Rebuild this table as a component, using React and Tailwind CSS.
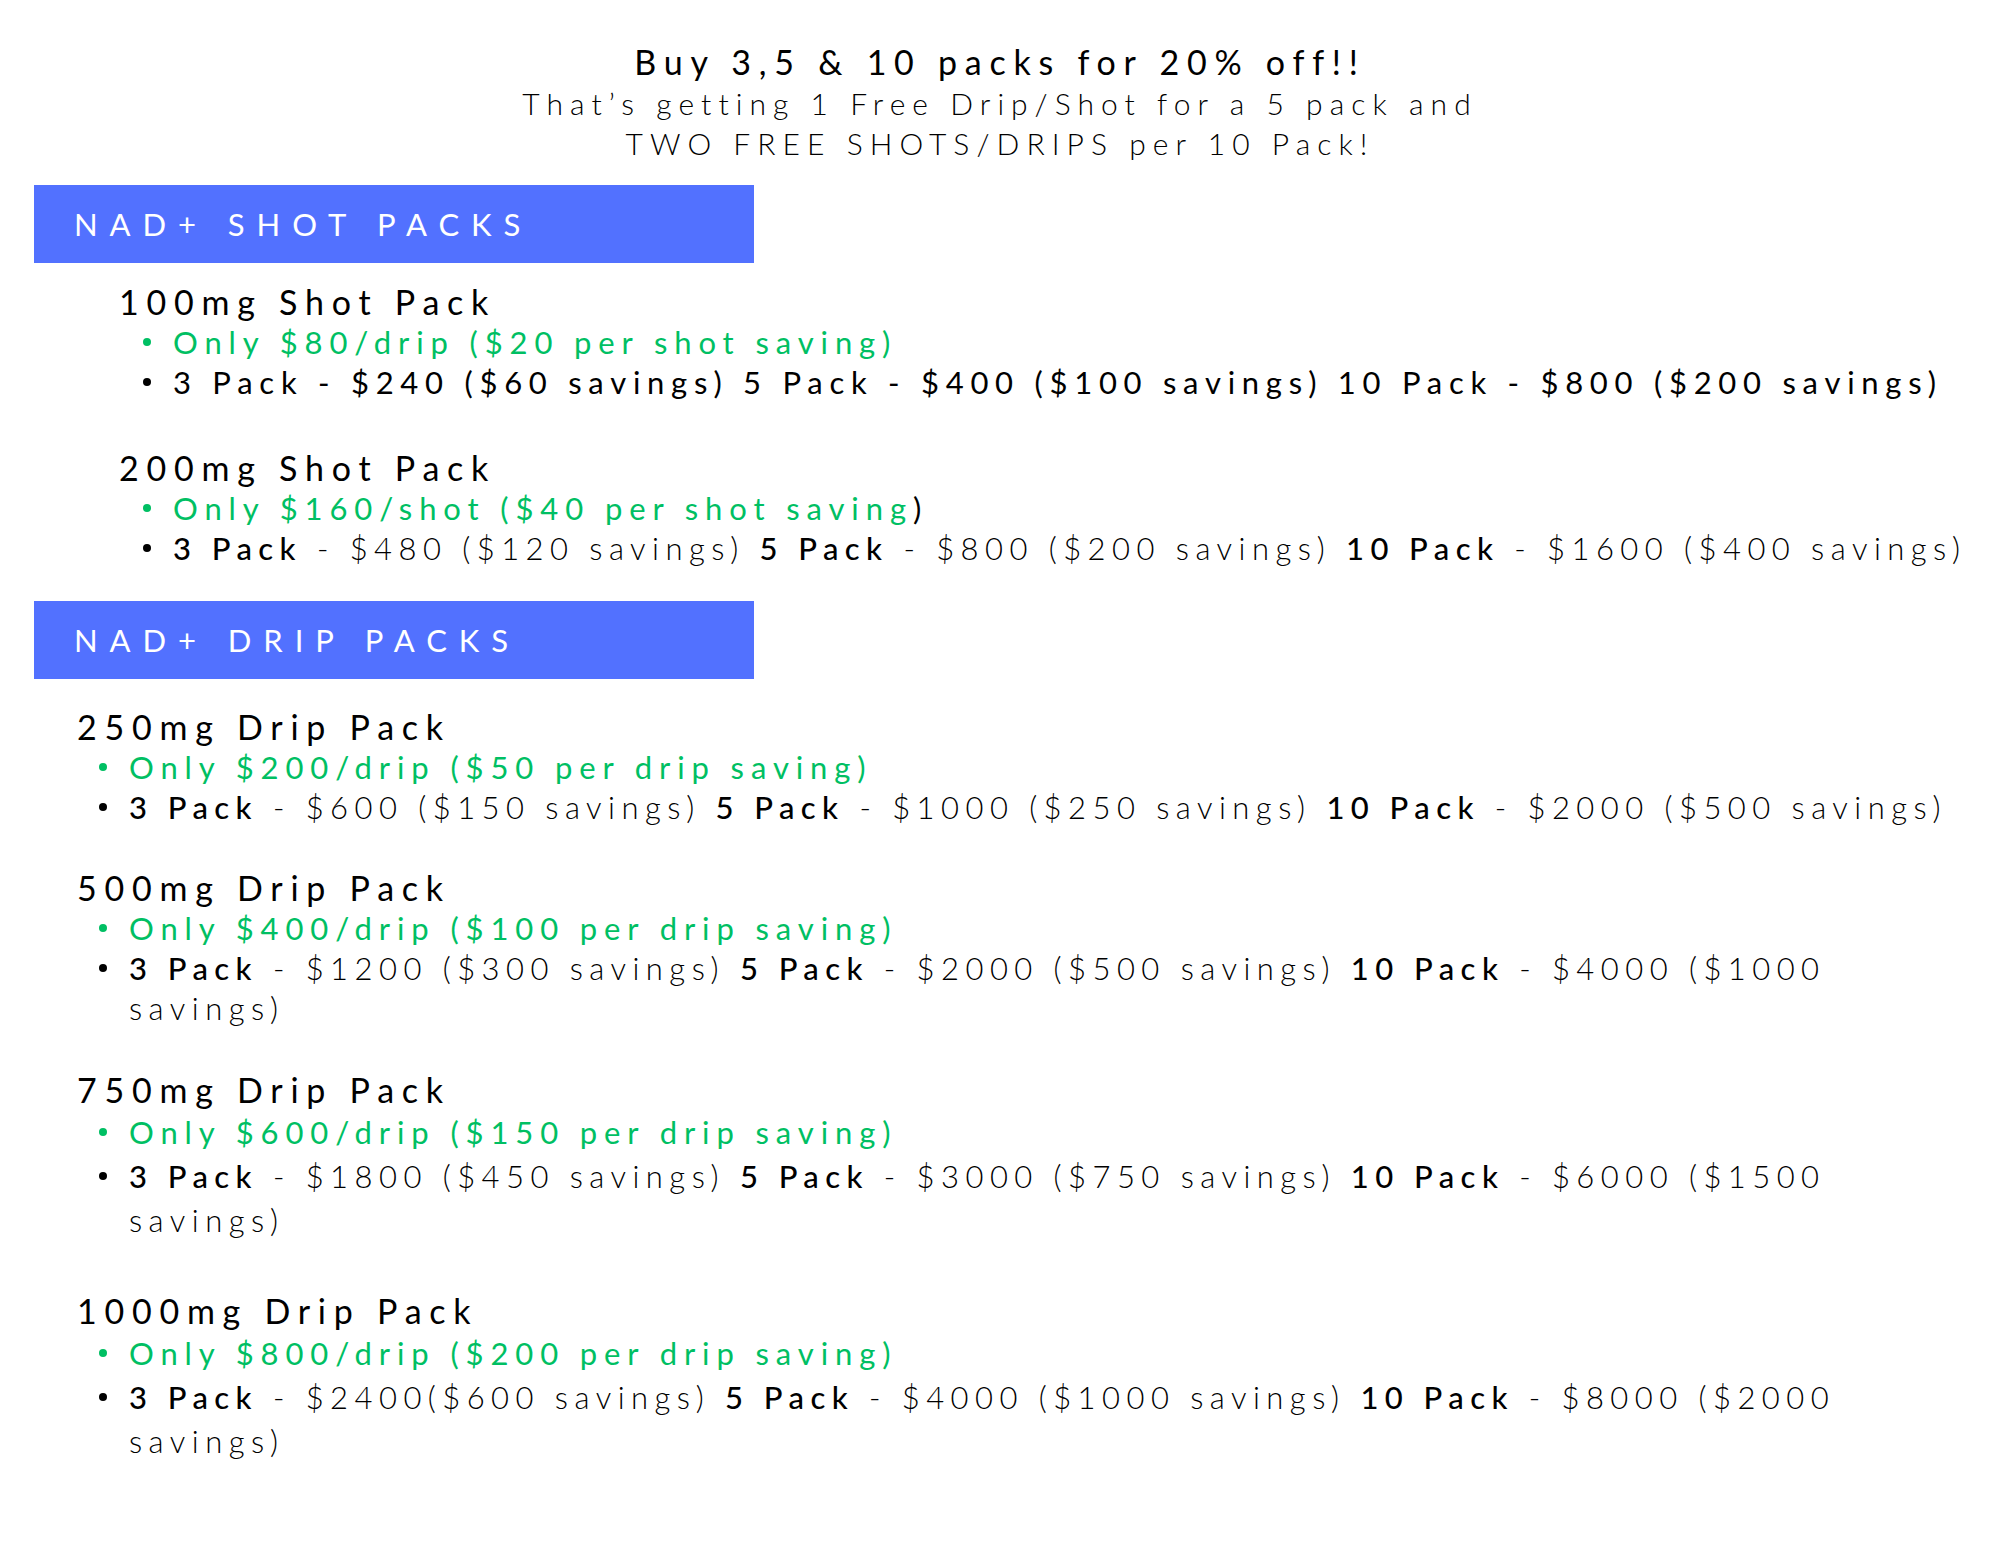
import React from "react";

const FONT = { fontFamily: "Lato, 'Open Sans', sans-serif" };

function Dot({ green }) {
  return (
    <span className="w-[30px] shrink-0 flex items-center">
      <span className={green ? "block w-[8px] h-[8px] rounded-full bg-[#00bf63]" : "block w-[8px] h-[8px] rounded-full bg-black"} />
    </span>
  );
}

function Bar({ children, mt }) {
  return (
    <div className={`ml-[34px] w-[720px] h-[78px] bg-[#5271ff] flex items-center pl-[40px] ${mt}`}>
      <span className="text-white text-[31px] tracking-[0.385em] font-normal whitespace-nowrap">{children}</span>
    </div>
  );
}

const HEAD = "text-[34px] leading-[40px] tracking-[0.228em] whitespace-nowrap";
const BODY = "text-[31px] tracking-[0.208em] whitespace-nowrap";
const GREEN = "flex text-[#00bf63] tracking-[0.222em]";

export default function App() {
  return (
    <div className="w-[2000px] h-[1545px] bg-white text-black" style={FONT}>
      {/* header */}
      <div className="pt-[40px] text-center">
        <div className="text-[34px] leading-[43px] tracking-[0.228em] font-normal">Buy 3,5 &amp; 10 packs for 20% off!!</div>
        <div className="text-[30px] leading-[40px] tracking-[0.235em] font-light">That’s getting 1 Free Drip/Shot for a 5 pack and</div>
        <div className="text-[30px] leading-[40px] tracking-[0.235em] font-light">TWO FREE SHOTS/DRIPS per 10 Pack!</div>
      </div>

      <Bar mt="mt-[22px]">NAD+ SHOT PACKS</Bar>

      {/* 100mg shot */}
      <div className="mt-[19px] pl-[119px]">
        <div className={HEAD}>100mg Shot Pack</div>
        <div className={`pl-[24px] leading-[40px] ${BODY}`}>
          <div className={GREEN}><Dot green /><span>Only $80/drip ($20 per shot saving)</span></div>
          <div className="flex tracking-[0.217em]"><Dot /><span>3 Pack - $240 ($60 savings) 5 Pack - $400 ($100 savings) 10 Pack - $800 ($200 savings)</span></div>
        </div>
      </div>

      {/* 200mg shot */}
      <div className="mt-[46px] pl-[119px]">
        <div className={HEAD}>200mg Shot Pack</div>
        <div className={`pl-[24px] leading-[40px] ${BODY}`}>
          <div className="flex tracking-[0.222em]"><Dot green /><span><span className="text-[#00bf63]">Only $160/shot ($40 per shot saving</span>)</span></div>
          <div className="flex"><Dot /><span className="font-light"><span className="font-medium">3 Pack</span> - $480 ($120 savings) <span className="font-medium">5 Pack</span> - $800 ($200 savings) <span className="font-medium">10 Pack</span> - $1600 ($400 savings)</span></div>
        </div>
      </div>

      <Bar mt="mt-[33px]">NAD+ DRIP PACKS</Bar>

      {/* 250mg */}
      <div className="mt-[28px] pl-[77px]">
        <div className={HEAD}>250mg Drip Pack</div>
        <div className={`pl-[22px] leading-[40px] ${BODY}`}>
          <div className={GREEN}><Dot green /><span>Only $200/drip ($50 per drip saving)</span></div>
          <div className="flex"><Dot /><span className="font-light"><span className="font-medium">3 Pack</span> - $600 ($150 savings) <span className="font-medium">5 Pack</span> - $1000 ($250 savings) <span className="font-medium">10 Pack</span> - $2000 ($500 savings)</span></div>
        </div>
      </div>

      {/* 500mg */}
      <div className="mt-[41px] pl-[77px]">
        <div className={HEAD}>500mg Drip Pack</div>
        <div className={`pl-[22px] leading-[40px] ${BODY}`}>
          <div className={GREEN}><Dot green /><span>Only $400/drip ($100 per drip saving)</span></div>
          <div className="flex items-start"><span className="h-[40px] flex items-center"><Dot /></span><span className="font-light"><span className="font-medium">3 Pack</span> - $1200 ($300 savings) <span className="font-medium">5 Pack</span> - $2000 ($500 savings) <span className="font-medium">10 Pack</span> - $4000 ($1000<br />savings)</span></div>
        </div>
      </div>

      {/* 750mg */}
      <div className="mt-[42px] pl-[77px]">
        <div className={HEAD}>750mg Drip Pack</div>
        <div className={`pl-[22px] leading-[44px] ${BODY}`}>
          <div className={GREEN}><Dot green /><span>Only $600/drip ($150 per drip saving)</span></div>
          <div className="flex items-start"><span className="h-[44px] flex items-center"><Dot /></span><span className="font-light"><span className="font-medium">3 Pack</span> - $1800 ($450 savings) <span className="font-medium">5 Pack</span> - $3000 ($750 savings) <span className="font-medium">10 Pack</span> - $6000 ($1500<br />savings)</span></div>
        </div>
      </div>

      {/* 1000mg */}
      <div className="mt-[49px] pl-[77px]">
        <div className={HEAD}>1000mg Drip Pack</div>
        <div className={`pl-[22px] leading-[44px] ${BODY}`}>
          <div className={GREEN}><Dot green /><span>Only $800/drip ($200 per drip saving)</span></div>
          <div className="flex items-start"><span className="h-[44px] flex items-center"><Dot /></span><span className="font-light"><span className="font-medium">3 Pack</span> - $2400($600 savings) <span className="font-medium">5 Pack</span> - $4000 ($1000 savings) <span className="font-medium">10 Pack</span> - $8000 ($2000<br />savings)</span></div>
        </div>
      </div>
    </div>
  );
}
